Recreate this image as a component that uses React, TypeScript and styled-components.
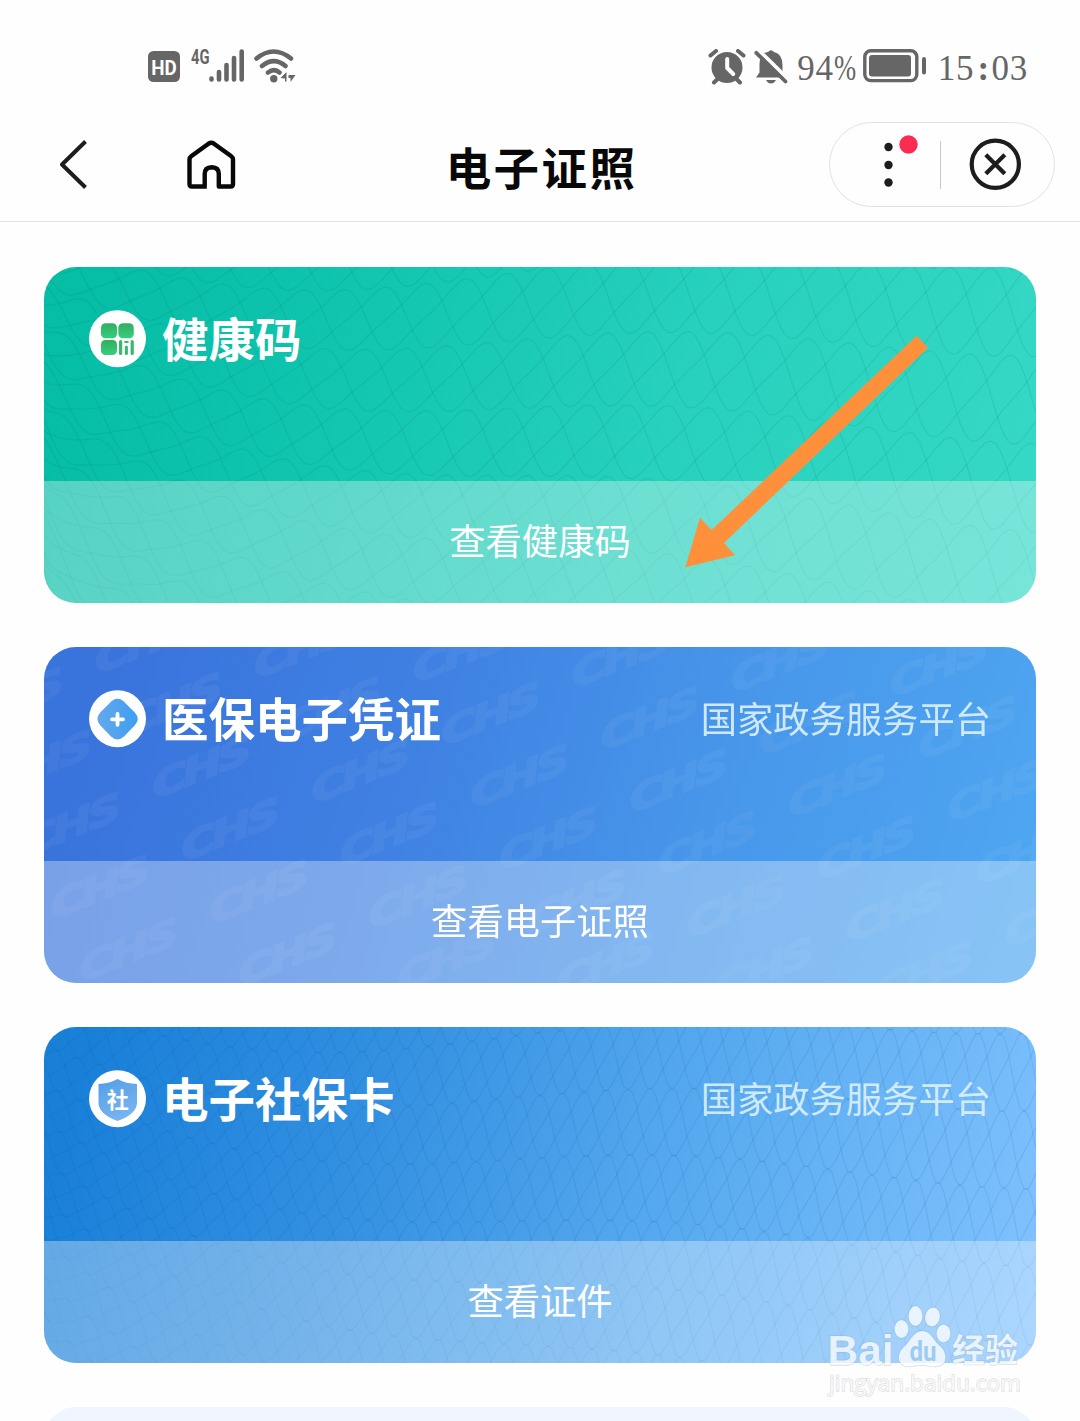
import React from 'react';
import styled, { createGlobalStyle } from 'styled-components';

const GlobalStyle = createGlobalStyle`
  * { box-sizing: border-box; }
  body { margin: 0; background: #fefefe; }
`;

const Screen = styled.div`
  position: relative;
  width: 1080px;
  height: 1421px;
  overflow: hidden;
  background: #fefefe;
  font-family: 'Noto Sans CJK SC', sans-serif;
`;

const StatusBar = styled.div`
  height: 108px;
  padding: 22px 52px 0 147px;
  display: flex;
  justify-content: space-between;
  color: #666;
`;

const StatusGroup = styled.div<{ $drop?: number }>`
  display: flex;
  height: 84px;
  align-items: center;
  padding-top: ${(p) => p.$drop ?? 0}px;
`;

const StatusIcon = styled.span<{ $left: number }>`
  display: flex;
  margin-left: ${(p) => p.$left}px;
`;

const StatusText = styled.span<{ $left: number }>`
  margin-left: ${(p) => p.$left}px;
  padding-top: 4px;
  font: 35px/40px 'Liberation Serif', serif;
  letter-spacing: 0.8px;
  white-space: nowrap;
`;

const Percent = styled.span`
  display: inline-block;
  width: 22px;
  transform: scaleX(0.76);
  transform-origin: left;
`;

const Colon = styled.span`
  display: inline-block;
  width: 17px;
  padding-left: 3px;
  font-weight: 700;
`;

const NavBar = styled.header`
  height: 114px;
  border-bottom: 1px solid #e4e4e4;
  display: grid;
  grid-template-columns: 300px 1fr 300px;
  align-items: center;
`;

const NavLeft = styled.div`
  display: flex;
  align-items: center;
  padding-left: 56px;
  gap: 94px;
`;

const NavTitle = styled.h1`
  margin: 3px 0 0 3px;
  text-align: center;
  font-size: 45.5px;
  line-height: 60px;
  font-weight: 700;
  letter-spacing: 2.4px;
  color: #080808;
`;

const Capsule = styled.div`
  justify-self: end;
  margin-right: 25px;
  width: 226px;
  height: 85px;
  border: 1px solid #e2e2e2;
  border-radius: 43px;
  display: flex;
  align-items: center;
`;

const CapsuleButton = styled.button<{ $width: number }>`
  width: ${(p) => p.$width}px;
  height: 83px;
  padding: 0;
  border: 0;
  background: none;
  display: flex;
`;

const Divider = styled.i`
  width: 1px;
  height: 48px;
  background: #c8c8c8;
`;

const CardList = styled.main`
  padding: 45px 44px 0;
  display: flex;
  flex-direction: column;
  gap: 44px;
`;

const CardBox = styled.section<{ $bg: string }>`
  position: relative;
  flex: none;
  height: 336px;
  border-radius: 32px;
  overflow: hidden;
  background: ${(p) => p.$bg};
  color: #fff;
  display: flex;
  flex-direction: column;
`;

const Texture = styled.svg`
  position: absolute;
  inset: 0;
`;

const CardHead = styled.div`
  position: relative;
  height: 214px;
  padding: 43px 45px 0;
  display: flex;
  align-items: flex-start;
`;

const CardTitle = styled.h2`
  margin: -5px 0 0 16px;
  flex: 1;
  font-size: 46.5px;
  line-height: 64px;
  font-weight: 700;
`;

const Source = styled.span`
  margin-top: 1px;
  font-size: 36.3px;
  line-height: 52px;
  color: rgba(228, 246, 255, 0.86);
`;

const CardAction = styled.div`
  position: relative;
  height: 122px;
  padding-bottom: 6px;
  display: flex;
  align-items: center;
  justify-content: center;
  background: rgba(255, 255, 255, 0.325);
  font-size: 36.3px;
  line-height: 52px;
`;

const NextCard = styled.section`
  flex: none;
  height: 336px;
  border-radius: 32px;
  background: #eff6ff;
`;

const Overlay = styled.svg<{ $x: number; $y: number }>`
  position: absolute;
  left: ${(p) => p.$x}px;
  top: ${(p) => p.$y}px;
`;

/*
 * Stacked bands of skewed sine strands. Bands are narrow on the left and fan
 * out to their full height on the right, so neighbouring bands just touch.
 */
function guillochePaths(wave: number, rowGap: number, strands: number): string[] {
  const paths: string[] = [];
  for (let row = -3; row < 12; row++) {
    for (let s = 0; s < strands; s++) {
      let d = '';
      for (let x = 0; x <= 992; x += 4) {
        const t = x / 992;
        const gap = 38 + (rowGap - 38) * Math.pow(t, 0.7);
        const phase = 2 * Math.PI * ((x + row * 20) / wave + s / strands);
        const drift = 50 * Math.sin(t * 2.6) + 22 * Math.sin(x / 135);
        const y = row * gap + drift + gap * 0.51 * Math.sin(phase + 0.5 * Math.sin(phase));
        d += `${x ? 'L' : 'M'}${x} ${y.toFixed(1)}`;
      }
      paths.push(d);
    }
  }
  return paths;
}

function Guilloche({ wave, gap, strands, color }: { wave: number; gap: number; strands: number; color: string }) {
  return (
    <Texture width="992" height="336" fill="none" stroke={color} strokeWidth="1.2">
      {guillochePaths(wave, gap, strands).map((d, i) => <path key={i} d={d} />)}
    </Texture>
  );
}

function ChsTexture() {
  const marks: { x: number; y: number }[] = [];
  for (let r = -4; r < 7; r++) {
    for (let c = -3; c < 9; c++) {
      const x = 156 + c * 159 + r * 28.7;
      const y = 121 + c * 4.7 + r * 62.5;
      if (x > -40 && x < 1032 && y > -28 && y < 355) marks.push({ x, y });
    }
  }
  return (
    <Texture width="992" height="336">
      <g opacity="0.05">
        {marks.map((m) => (
          <text
            key={`${m.x}-${m.y}`}
            transform={`translate(${m.x} ${m.y}) rotate(-22) skewX(-14)`}
            y="12"
            textAnchor="middle"
            textLength="102"
            lengthAdjust="spacingAndGlyphs"
            fontFamily="DejaVu Sans, sans-serif"
            fontWeight="700"
            fontStyle="italic"
            fontSize="35"
            letterSpacing="-3"
            fill="#fff"
            stroke="#fff"
            strokeWidth="1.8"
          >
            CHS
          </text>
        ))}
      </g>
    </Texture>
  );
}

const HealthIcon = () => (
  <svg width="57" height="58" viewBox="0 0 57 58">
    <defs>
      <linearGradient id="hg" x1="0" y1="0" x2="0" y2="1">
        <stop offset="0" stopColor="#34ad60" />
        <stop offset="1" stopColor="#35cf80" />
      </linearGradient>
    </defs>
    <circle cx="28.5" cy="28.7" r="28.5" fill="#fff" />
    <rect x="12" y="13.3" width="16" height="15" rx="4.5" fill="url(#hg)" />
    <rect x="29.3" y="13.3" width="15.5" height="15" rx="4.5" fill="url(#hg)" />
    <rect x="12" y="30" width="16" height="15" rx="4.5" fill="url(#hg)" />
    <path d="M31.6 31.5v12M43.2 31.5v12" stroke="#36b96b" strokeWidth="3.2" strokeLinecap="round" />
    <path d="M37.4 37v6.500" stroke="#36b96b" strokeWidth="3" strokeLinecap="round" />
    <path d="M36.2 32h2.6" stroke="#36b96b" strokeWidth="2" strokeLinecap="round" />
  </svg>
);

const MedicalIcon = () => (
  <svg width="57" height="58" viewBox="0 0 57 58">
    <defs>
      <linearGradient id="mg" x1="0" y1="0.5" x2="1" y2="0.5">
        <stop offset="0" stopColor="#65a7ec" />
        <stop offset="1" stopColor="#3d9ff2" />
      </linearGradient>
    </defs>
    <circle cx="28.5" cy="28.7" r="28.5" fill="#fff" />
    <path d="M22.5 11.2Q28.5 6.5 34.5 11.2L45.8 22.6Q51.6 29 45.8 35.3L35 46.5Q28.5 52.5 22 46.5L11.2 35.3Q5.6 29 11.2 22.6Z" fill="url(#mg)" />
    <path d="M28.5 23.8v11M23 29.3h11" stroke="#fff" strokeWidth="3.8" strokeLinecap="round" />
  </svg>
);

const SocialIcon = () => (
  <svg width="57" height="58" viewBox="0 0 57 58">
    <defs>
      <linearGradient id="sg" x1="0" y1="0" x2="0.4" y2="1">
        <stop offset="0" stopColor="#539fe8" />
        <stop offset="1" stopColor="#77b3ef" />
      </linearGradient>
    </defs>
    <circle cx="28.5" cy="28.7" r="28.5" fill="#fff" />
    <path d="M28.5 9Q37 13.8 48 14V33.5Q47 44.5 28.5 51Q10.5 44.5 9.5 33.5V14Q20 13.8 28.5 9Z" fill="url(#sg)" />
    <text x="28.7" y="37.5" textAnchor="middle" fontSize="22" fontWeight="700" fill="#fff" fontFamily="Noto Sans CJK SC, sans-serif">社</text>
  </svg>
);

const SignalIcons = () => (
  <svg width="150" height="40" viewBox="0 0 150 40" fill="#666">
    <rect x="1" y="7" width="32" height="31" rx="5.5" />
    <text x="17" y="30.5" textAnchor="middle" fontFamily="Roboto, sans-serif" fontWeight="700" fontSize="21" textLength="25.5" lengthAdjust="spacingAndGlyphs" fill="#fff">HD</text>
    <text x="44" y="19.5" fontFamily="Roboto, sans-serif" fontWeight="700" fontSize="19.5" textLength="18.5" lengthAdjust="spacingAndGlyphs">4G</text>
    <path d="M64.5 34.5v1M72 28v7.5M79.5 21v14.5M87 14v21.5M94.7 7.5v28" stroke="#666" strokeWidth="4.6" strokeLinecap="round" />
    <path d="M109.5 14.500Q126.500 .500 144 14.500M115 22Q127 12.200 138.500 22M121 28.500Q127 23.800 132.500 28.500" fill="none" stroke="#666" strokeWidth="4.500" strokeLinecap="round" />
    <circle cx="126.800" cy="34.700" r="3.700" />
    <path d="M133.500 34l6-6v9.500h-1.500v-3zM141.500 31h7l-5 7v-4h-2z" />
  </svg>
);

const AlarmIcon = () => (
  <svg width="38" height="36" viewBox="0 0 38 36">
    <circle cx="19" cy="18.500" r="15.500" fill="#666" />
    <path d="M2.500 6.500L8 2M35.500 6.500L30 2M6 33.500l5-5M32 33.500l-5-5" stroke="#666" strokeWidth="4" strokeLinecap="round" />
    <path d="M19.200 10v9l6 6" stroke="#fff" strokeWidth="4" fill="none" strokeLinecap="round" strokeLinejoin="round" />
  </svg>
);

const MutedBellIcon = () => (
  <svg width="34" height="36" viewBox="0 0 34 36">
    <path d="M2 28.500L5.500 23.500V16Q5.500 3.500 14 3Q17-.500 20 3Q28.500 5 28.500 16V23.500L31.500 28.500Z" fill="#666" />
    <path d="M12 31h10q-2 3.500-5 3.500t-5-3.500z" fill="#666" />
    <path d="M4 .500L35 31" stroke="#fefefe" strokeWidth="4" />
    <path d="M2.300 3.800L31.500 32.500" stroke="#666" strokeWidth="3.800" strokeLinecap="round" />
  </svg>
);

const BatteryIcon = () => (
  <svg width="64" height="36" viewBox="0 0 64 36">
    <rect x="1.800" y="1.800" width="52" height="29.800" rx="6" fill="none" stroke="#666" strokeWidth="3.400" />
    <rect x="6" y="6" width="42" height="21.500" rx="3" fill="#666" />
    <path d="M61 10v13.500" stroke="#666" strokeWidth="4" strokeLinecap="round" />
  </svg>
);

const BackIcon = () => (
  <svg width="36" height="56" viewBox="0 0 36 56" fill="none" stroke="#1d1d1d" strokeWidth="4" strokeLinejoin="round">
    <path d="M29.500 4.500L6 27.500L29.500 50.500" />
  </svg>
);

const HomeIcon = () => (
  <svg width="50" height="50" viewBox="0 0 50 50" fill="none" stroke="#080808" strokeWidth="4.400" strokeLinejoin="round">
    <path d="M20.800 46.500H5.800Q3.500 46.500 3.500 44V19.500Q3.500 17.500 5.500 16L22.500 3.700Q25.200 2 28 3.700L45 16Q47 17.500 47 19.500V44Q47 46.500 44.700 46.500H32.800V34Q32.800 27.500 25.800 27.300Q18.700 27.500 18.700 34V46.500" />
  </svg>
);

const MoreIcon = () => (
  <svg width="110" height="83" viewBox="0 0 110 83">
    <g fill="#1d1d1d">
      <circle cx="58.500" cy="24" r="4.200" />
      <circle cx="58.500" cy="42" r="4.200" />
      <circle cx="58.500" cy="59.500" r="4.200" />
    </g>
    <circle cx="78.500" cy="21.500" r="9.200" fill="#fb2b51" />
  </svg>
);

const CloseIcon = () => (
  <svg width="112" height="83" viewBox="0 0 112 83" fill="none" stroke="#1d1d1d">
    <circle cx="54.300" cy="41.300" r="23.600" strokeWidth="4.200" />
    <path d="M44.800 31.800L63.800 50.800M63.800 31.800L44.800 50.800" strokeWidth="4.200" />
  </svg>
);

const Arrow = () => (
  <Overlay $x={680} $y={330} width="260" height="245">
    <path d="M236.700 5.700L248 17.700L44 213L55 225.300L5.300 237.300L20 187.700L31.700 200Z" fill="#ff903b" />
  </Overlay>
);

const BaiduMark = () => (
  <Overlay $x={820} $y={1296} width="220" height="110">
    <g fill="#fff" fillOpacity="0.76" stroke="#8ba6bd" strokeOpacity="0.34" strokeWidth="1.400" paintOrder="stroke">
      <text x="7.500" y="69" fontFamily="Liberation Sans, sans-serif" fontWeight="700" fontSize="43" textLength="66" lengthAdjust="spacingAndGlyphs">Bai</text>
      <ellipse cx="81.500" cy="33" rx="7" ry="9" />
      <ellipse cx="95.500" cy="20" rx="7" ry="10" />
      <ellipse cx="112.500" cy="21" rx="7.300" ry="9.500" transform="rotate(12 112.500 21)" />
      <ellipse cx="123.500" cy="37.500" rx="7" ry="9" />
      <path d="M102 35C111 35 113 44 120 50C128 57 128 70 116 70.500C109 71 106 69 102 69C97 69 94 71 88 70.500C77 70 76 58 84 51C91 45 93 35 102 35Z" />
      <text x="132" y="66" fontFamily="Noto Sans CJK SC, sans-serif" fontWeight="700" fontSize="33" textLength="66" lengthAdjust="spacingAndGlyphs">经验</text>
      <text x="9" y="95" fontFamily="Open Sans, sans-serif" fontSize="21.500" textLength="192" lengthAdjust="spacingAndGlyphs" stroke="#888" strokeOpacity="0.26">jingyan.baidu.com</text>
    </g>
    <text x="89.500" y="65" fontFamily="Roboto, sans-serif" fontWeight="700" fontSize="27" textLength="27" lengthAdjust="spacingAndGlyphs" fill="#9ecbf1">du</text>
  </Overlay>
);

interface CardProps {
  bg: string;
  texture: React.ReactNode;
  icon: React.ReactNode;
  title: string;
  source?: string;
  action: string;
}

const Card = ({ bg, texture, icon, title, source, action }: CardProps) => (
  <CardBox $bg={bg}>
    {texture}
    <CardHead>
      {icon}
      <CardTitle>{title}</CardTitle>
      {source && <Source>{source}</Source>}
    </CardHead>
    <CardAction>{action}</CardAction>
  </CardBox>
);

export default function App() {
  return (
    <Screen>
      <GlobalStyle />
      <StatusBar>
        <StatusGroup><SignalIcons /></StatusGroup>
        <StatusGroup $drop={6}>
          <AlarmIcon />
          <StatusIcon $left={8}><MutedBellIcon /></StatusIcon>
          <StatusText $left={9}>94<Percent>%</Percent></StatusText>
          <StatusIcon $left={7}><BatteryIcon /></StatusIcon>
          <StatusText $left={11}>15<Colon>:</Colon>03</StatusText>
        </StatusGroup>
      </StatusBar>
      <NavBar>
        <NavLeft><BackIcon /><HomeIcon /></NavLeft>
        <NavTitle>电子证照</NavTitle>
        <Capsule>
          <CapsuleButton $width={110}><MoreIcon /></CapsuleButton>
          <Divider />
          <CapsuleButton $width={112}><CloseIcon /></CapsuleButton>
        </Capsule>
      </NavBar>
      <CardList>
        <Card
          bg="linear-gradient(108deg, #06bda6 5%, #12c6b0 32%, #27d1bd 62%, #37d9c6 100%)"
          texture={<Guilloche wave={121} gap={88} strands={3} color="rgba(0, 105, 95, 0.12)" />}
          icon={<HealthIcon />}
          title="健康码"
          action="查看健康码"
        />
        <Card
          bg="linear-gradient(108deg, #3973dc 5%, #3f80e2 35%, #4796ea 65%, #4fa8f2 100%)"
          texture={<ChsTexture />}
          icon={<MedicalIcon />}
          title="医保电子凭证"
          source="国家政务服务平台"
          action="查看电子证照"
        />
        <Card
          bg="linear-gradient(108deg, #1980d8 5%, #3390e1 32%, #5aacf0 65%, #83c3ff 100%)"
          texture={<Guilloche wave={66} gap={78} strands={3} color="rgba(20, 85, 165, 0.11)" />}
          icon={<SocialIcon />}
          title="电子社保卡"
          source="国家政务服务平台"
          action="查看证件"
        />
        <NextCard />
      </CardList>
      <Arrow />
      <BaiduMark />
    </Screen>
  );
}
